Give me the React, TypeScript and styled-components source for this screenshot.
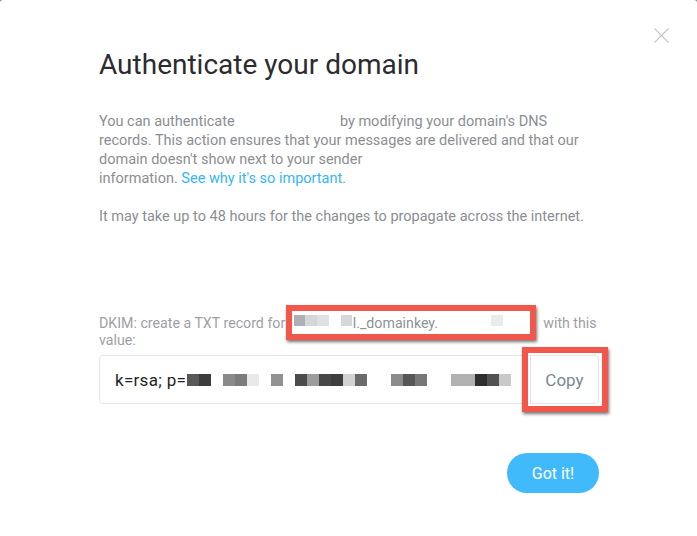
import React from "react";
import styled, { createGlobalStyle } from "styled-components";

const GlobalStyle = createGlobalStyle`
  html, body {
    margin: 0;
    padding: 0;
    background: #8d8d8d;
  }
  body {
    font-family: Roboto, "Liberation Sans", Arial, sans-serif;
  }
`;

const Modal = styled.div`
  position: relative;
  width: 697px;
  height: 536px;
  box-sizing: border-box;
  background: #ffffff;
  border-radius: 3px 3px 0 0;
  padding-top: 28px;
  display: flex;
  flex-direction: column;
`;

const CloseRow = styled.div`
  display: flex;
  justify-content: flex-end;
  padding-right: 28px;
`;

const CloseButton = styled.button`
  width: 15px;
  height: 15px;
  padding: 0;
  border: none;
  background: transparent;
  cursor: pointer;
  display: flex;
`;

const Content = styled.div`
  padding: 0 98px 0 99px;
  display: flex;
  flex-direction: column;
`;

const Title = styled.h1`
  margin: 6px 0 0;
  font-size: 28px;
  line-height: 32px;
  font-weight: 400;
  color: #2c2c30;
`;

const Paragraph = styled.p<{ $gap: number }>`
  margin: ${(p) => p.$gap}px 0 0;
  font-size: 14.5px;
  line-height: 19px;
  color: #8c8e93;
`;

const Hidden = styled.span`
  display: inline-block;
  width: 98px;
`;

const Link = styled.a`
  color: #36b5f6;
  text-decoration: none;
`;

const RecordLabel = styled.div`
  margin-top: 89px;
  font-size: 14.2px;
  line-height: 17px;
  color: #9da0a5;
`;

const LabelLine = styled.span`
  white-space: nowrap;
`;

const HostName = styled.span`
  position: relative;
  display: inline-flex;
  align-items: flex-start;
  vertical-align: top;
  width: 251px;
  height: 17px;
  padding-left: 5px;
  box-sizing: border-box;
  color: #8f9297;
`;

const Highlight = styled.span<{ $t: number; $r: number; $b: number; $l: number }>`
  position: absolute;
  top: ${(p) => p.$t}px;
  right: ${(p) => p.$r}px;
  bottom: ${(p) => p.$b}px;
  left: ${(p) => p.$l}px;
  border: 6px solid #f2574c;
  box-shadow: 1px 2px 3px rgba(0, 0, 0, 0.55);
  pointer-events: none;
  z-index: 0;
`;

const HostBlur = styled.span<{ $color: string; $w: number; $gap?: number }>`
  position: relative;
  z-index: 1;
  flex: none;
  width: ${(p) => p.$w}px;
  height: 11px;
  margin-left: ${(p) => p.$gap || 0}px;
  background: ${(p) => p.$color};
`;

const HostText = styled.span`
  position: relative;
  z-index: 1;
  margin-left: 1px;
`;

const ValueRow = styled.div`
  margin-top: 6px;
  display: flex;
  height: 49px;
  box-sizing: border-box;
  border: 1px solid #e3e4e6;
  border-radius: 4px;
`;

const ValueField = styled.div`
  flex: 1;
  display: flex;
  align-items: center;
  padding-left: 15px;
  font-size: 17px;
  letter-spacing: 0.3px;
  color: #1f1f22;
  overflow: hidden;
  white-space: nowrap;
`;

const KeyCells = styled.span`
  display: flex;
  margin-left: 1px;
`;

const Cell = styled.span<{ $color: string | null }>`
  flex: none;
  width: 12px;
  height: 12px;
  background: ${(p) => p.$color || "transparent"};
`;

const CopyButton = styled.button`
  position: relative;
  width: 68px;
  border: none;
  border-left: 1px solid #e6e7e9;
  background: #ffffff;
  font-family: inherit;
  font-size: 17px;
  color: #778797;
  border-radius: 0 4px 4px 0;
  padding: 0;
  cursor: pointer;
`;

const Footer = styled.div`
  margin-top: 49px;
  display: flex;
  justify-content: flex-end;
`;

const PrimaryButton = styled.button`
  width: 92px;
  height: 40px;
  border: none;
  border-radius: 20px;
  background: #41bafc;
  color: #ffffff;
  font-family: inherit;
  font-size: 16px;
  padding: 0;
  cursor: pointer;
`;

const keyCells: (string | null)[] = [
  "#595959", "#3d3d3d", null, "#8a8a8a", "#7c7c7c", "#e9e9e9", null,
  "#929292", null, "#4b4b4b", "#9c9c9c", "#474747", "#3e3e3e", "#d2d2d2",
  "#6a6a6a", null, null, "#8b8b8b", "#575757", "#787878", null, null,
  "#b1b1b1", "#b1b1b1", "#2f2f2f", "#525252", "#c9c9c9",
];

export default function App() {
  return (
    <>
      <GlobalStyle />
      <Modal>
        <CloseRow>
          <CloseButton aria-label="Close">
            <svg width="15" height="15" viewBox="0 0 15 15">
              <path
                d="M0.5 0.5 L14.5 14.5 M14.5 0.5 L0.5 14.5"
                stroke="#c6c6c6"
                strokeWidth="1.1"
                fill="none"
              />
            </svg>
          </CloseButton>
        </CloseRow>
        <Content>
          <Title>Authenticate your domain</Title>
          <Paragraph $gap={31}>
            You can authenticate <Hidden /> by modifying your domain's DNS
            <br />
            records. This action ensures that your messages are delivered and
            that our
            <br />
            domain doesn't show next to your sender
            <br />
            information. <Link href="#">See why it's so important</Link>.
          </Paragraph>
          <Paragraph $gap={19}>
            It may take up to 48 hours for the changes to propagate across the
            internet.
          </Paragraph>
          <RecordLabel>
            <LabelLine>
              DKIM: create a TXT record for{" "}
              <HostName>
                <Highlight $t={-10} $r={4} $b={-8} $l={-3} />
                <HostBlur $color="#aeb0b4" $w={11} />
                <HostBlur $color="#d4d6da" $w={12} />
                <HostBlur $color="#dfe1e4" $w={12} />
                <HostBlur $color="#d5d7da" $w={11} $gap={12} />
                <HostText>l._domainkey.</HostText>
                <HostBlur $color="#eaebed" $w={12} $gap={53} />
              </HostName>{" "}
              with this
            </LabelLine>
            <br />
            value:
          </RecordLabel>
          <ValueRow>
            <ValueField>
              k=rsa; p=
              <KeyCells>
                {keyCells.map((c, i) => (
                  <Cell key={i} $color={c} />
                ))}
              </KeyCells>
            </ValueField>
            <CopyButton>
              <Highlight $t={-9} $r={-10} $b={-9} $l={-9} />
              Copy
            </CopyButton>
          </ValueRow>
          <Footer>
            <PrimaryButton>Got it!</PrimaryButton>
          </Footer>
        </Content>
      </Modal>
    </>
  );
}
